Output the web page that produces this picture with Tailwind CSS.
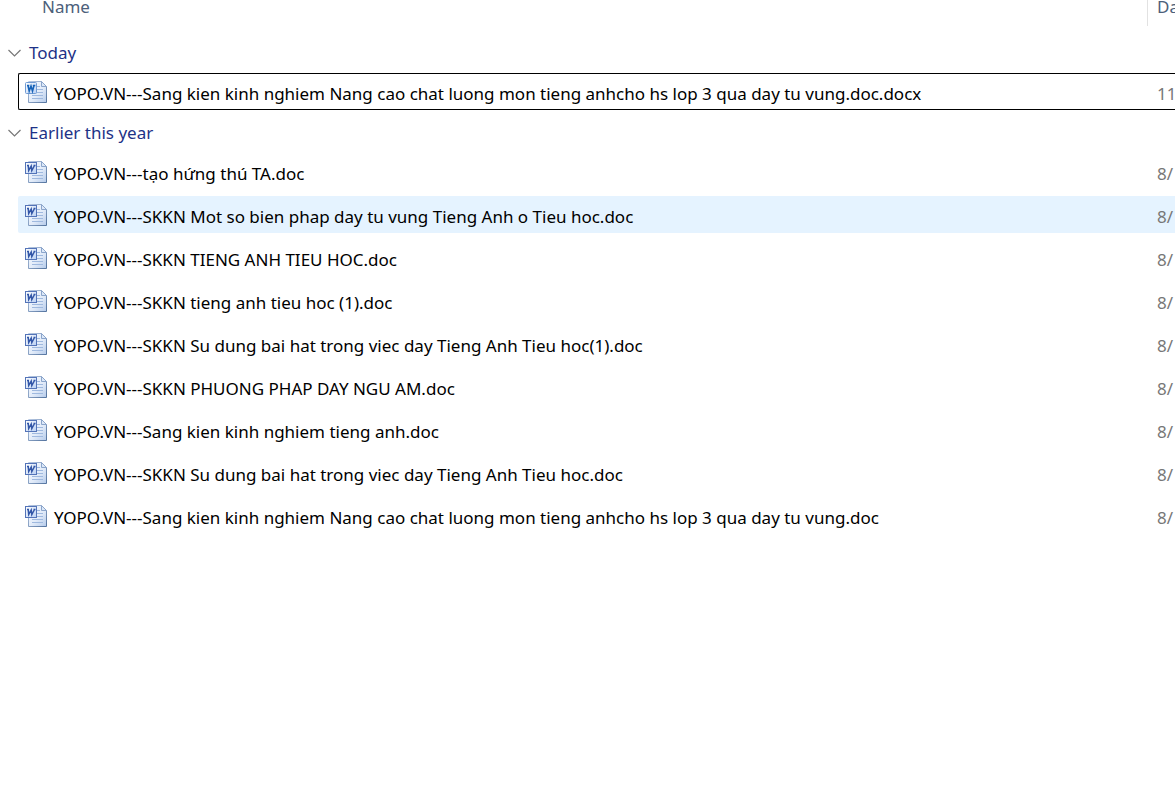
<!DOCTYPE html>
<html lang="vi">
<head>
<meta charset="utf-8">
<meta name="viewport" content="width=device-width, initial-scale=1">
<title>Files</title>
<script src="https://cdn.jsdelivr.net/npm/@tailwindcss/browser@4"></script>
</head>
<body class="min-h-screen overflow-x-hidden bg-white text-[17px] text-black" style="font-family:'Segoe UI','Noto Sans','Open Sans',sans-serif">
<svg class="absolute size-0" aria-hidden="true">
  <defs>
    <linearGradient id="paper" x1="0" y1="0" x2="1" y2="1"><stop offset="0" stop-color="#f6faff"/><stop offset=".55" stop-color="#e3ecf9"/><stop offset="1" stop-color="#b4caea"/></linearGradient>
    <linearGradient id="edge" x1="0" y1="0" x2="1" y2="1"><stop offset="0" stop-color="#b9cae4"/><stop offset="1" stop-color="#54749f"/></linearGradient>
    <linearGradient id="tile" x1="0" y1="0" x2="1" y2="1"><stop offset="0" stop-color="#ffffff"/><stop offset="1" stop-color="#b9d0f3"/></linearGradient>
    <symbol id="page" viewBox="0 0 24 24">
      <path d="M4.500 1.500h13l5 5v16h-18z" fill="url(#paper)" stroke="url(#edge)"/>
      <path d="M17.500 1.500v5h5z" fill="#dce8f8" stroke="#8ba5cb"/>
      <path d="M13 6.500h3M13 9.500h6M13 12.500h6M8 15.500h11M8 18.500h11" stroke="#9fb9df"/>
    </symbol>
    <symbol id="doc" viewBox="0 0 24 24">
      <use href="#page"/>
      <rect x="1.500" y="2.500" width="11" height="11" fill="url(#tile)" stroke="#5474b8"/>
      <path d="M3 5.500h2M4.200 5.500l.5 5 2.500-4.500.6 4.500 2.700-5M9.500 5.500h2" fill="none" stroke="#3357a8" stroke-width="1.500"/>
    </symbol>
    <symbol id="docx" viewBox="0 0 24 24">
      <use href="#page"/>
      <rect x="1.500" y="2.500" width="11" height="11" rx="1" fill="url(#tile)" stroke="#709bd3"/>
      <path d="M3 5.500h2.300M4 5.500l1.200 5.500 1.800-5 1.500 5 1.500-5.500M8.800 5.500h2.500" fill="none" stroke="#1763b8" stroke-width="1.600"/>
    </symbol>
  </defs>
</svg>
<table class="block w-full">
  <thead class="block">
    <tr class="flex h-[26px] pl-[42px] text-left leading-[13px] text-[#4c607a]">
      <th class="min-w-0 flex-1 font-normal">Name</th>
      <th class="w-7 shrink-0 overflow-hidden border-l border-[#e2e2e2] pl-[9px] font-normal">Da</th>
    </tr>
  </thead>
  <tbody class="block">
    <tr class="flex h-[47px] items-center pt-[6px] text-[#1e3287]"><th class="pl-2 font-normal"><button class="flex items-center gap-2" aria-expanded="true"><svg class="h-2 w-[13px]" viewBox="0 0 13 8" fill="none" stroke="#777" stroke-width="1.200"><path d="M.5 1l6 6 6-6"/></svg>Today</button></th></tr>
    <tr class="ml-[18px] flex h-[37px] items-center rounded-l-[2px] border border-r-0 border-black pl-[5px]"><td class="flex min-w-0 flex-1 items-center gap-[6px] whitespace-nowrap"><svg class="size-6 shrink-0"><use href="#docx"/></svg><span class="pt-1">YOPO.VN---Sang kien kinh nghiem Nang cao chat luong mon tieng anhcho hs lop 3 qua day tu vung.doc.docx</span></td><td class="w-[18px] shrink-0 overflow-hidden pt-1 text-[#777]">11</td></tr>
  </tbody>
  <tbody class="flex flex-col gap-[6px]">
    <tr class="flex h-[37px] items-center pt-2 text-[#1e3287]"><th class="pl-2 font-normal"><button class="flex items-center gap-2" aria-expanded="true"><svg class="h-2 w-[13px]" viewBox="0 0 13 8" fill="none" stroke="#777" stroke-width="1.200"><path d="M.5 1l6 6 6-6"/></svg>Earlier this year</button></th></tr>
    <tr class="ml-[18px] flex h-[37px] items-center pl-[6px]"><td class="flex min-w-0 flex-1 items-center gap-[6px] whitespace-nowrap"><svg class="size-6 shrink-0"><use href="#doc"/></svg><span class="pt-1">YOPO.VN---tạo hứng thú TA.doc</span></td><td class="w-[18px] shrink-0 overflow-hidden pt-1 text-[#777]">8/</td></tr>
    <tr class="ml-[18px] flex h-[37px] items-center rounded-l-[2px] bg-[#e5f3ff] pl-[6px]"><td class="flex min-w-0 flex-1 items-center gap-[6px] whitespace-nowrap"><svg class="size-6 shrink-0"><use href="#doc"/></svg><span class="pt-1">YOPO.VN---SKKN Mot so bien phap day tu vung Tieng Anh o Tieu hoc.doc</span></td><td class="w-[18px] shrink-0 overflow-hidden pt-1 text-[#777]">8/</td></tr>
    <tr class="ml-[18px] flex h-[37px] items-center pl-[6px]"><td class="flex min-w-0 flex-1 items-center gap-[6px] whitespace-nowrap"><svg class="size-6 shrink-0"><use href="#doc"/></svg><span class="pt-1">YOPO.VN---SKKN TIENG ANH TIEU HOC.doc</span></td><td class="w-[18px] shrink-0 overflow-hidden pt-1 text-[#777]">8/</td></tr>
    <tr class="ml-[18px] flex h-[37px] items-center pl-[6px]"><td class="flex min-w-0 flex-1 items-center gap-[6px] whitespace-nowrap"><svg class="size-6 shrink-0"><use href="#doc"/></svg><span class="pt-1">YOPO.VN---SKKN tieng anh tieu hoc (1).doc</span></td><td class="w-[18px] shrink-0 overflow-hidden pt-1 text-[#777]">8/</td></tr>
    <tr class="ml-[18px] flex h-[37px] items-center pl-[6px]"><td class="flex min-w-0 flex-1 items-center gap-[6px] whitespace-nowrap"><svg class="size-6 shrink-0"><use href="#doc"/></svg><span class="pt-1">YOPO.VN---SKKN Su dung bai hat trong viec day Tieng Anh Tieu hoc(1).doc</span></td><td class="w-[18px] shrink-0 overflow-hidden pt-1 text-[#777]">8/</td></tr>
    <tr class="ml-[18px] flex h-[37px] items-center pl-[6px]"><td class="flex min-w-0 flex-1 items-center gap-[6px] whitespace-nowrap"><svg class="size-6 shrink-0"><use href="#doc"/></svg><span class="pt-1">YOPO.VN---SKKN PHUONG PHAP DAY NGU AM.doc</span></td><td class="w-[18px] shrink-0 overflow-hidden pt-1 text-[#777]">8/</td></tr>
    <tr class="ml-[18px] flex h-[37px] items-center pl-[6px]"><td class="flex min-w-0 flex-1 items-center gap-[6px] whitespace-nowrap"><svg class="size-6 shrink-0"><use href="#doc"/></svg><span class="pt-1">YOPO.VN---Sang kien kinh nghiem tieng anh.doc</span></td><td class="w-[18px] shrink-0 overflow-hidden pt-1 text-[#777]">8/</td></tr>
    <tr class="ml-[18px] flex h-[37px] items-center pl-[6px]"><td class="flex min-w-0 flex-1 items-center gap-[6px] whitespace-nowrap"><svg class="size-6 shrink-0"><use href="#doc"/></svg><span class="pt-1">YOPO.VN---SKKN Su dung bai hat trong viec day Tieng Anh Tieu hoc.doc</span></td><td class="w-[18px] shrink-0 overflow-hidden pt-1 text-[#777]">8/</td></tr>
    <tr class="ml-[18px] flex h-[37px] items-center pl-[6px]"><td class="flex min-w-0 flex-1 items-center gap-[6px] whitespace-nowrap"><svg class="size-6 shrink-0"><use href="#doc"/></svg><span class="pt-1">YOPO.VN---Sang kien kinh nghiem Nang cao chat luong mon tieng anhcho hs lop 3 qua day tu vung.doc</span></td><td class="w-[18px] shrink-0 overflow-hidden pt-1 text-[#777]">8/</td></tr>
  </tbody>
</table>
</body>
</html>
